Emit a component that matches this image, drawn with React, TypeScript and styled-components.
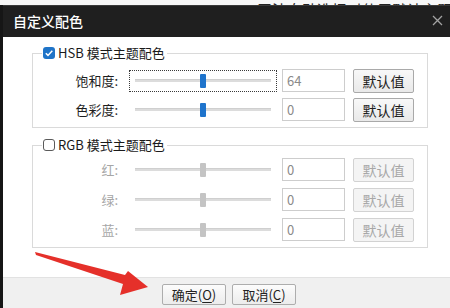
import styled, { createGlobalStyle } from 'styled-components';

const GlobalStyle = createGlobalStyle`
    html, body {
        margin: 0;
        padding: 0;
        overflow: hidden;
        background: #ffffff;
    }
    * {
        box-sizing: border-box;
    }
`;

const font = `"Noto Sans CJK SC", "Noto Sans", sans-serif`;

type RowData = { label: string; value: string; pos: number; focused?: boolean };

const hsbRows: RowData[] = [
    { label: '饱和度:', value: '64', pos: 48, focused: true },
    { label: '色彩度:', value: '0', pos: 48 },
];

const rgbRows: RowData[] = [
    { label: '红:', value: '0', pos: 48 },
    { label: '绿:', value: '0', pos: 48 },
    { label: '蓝:', value: '0', pos: 48 },
];

function CheckMark() {
    return (
        <svg width="12" height="12" viewBox="0 0 12 12">
            <rect x="0" y="0" width="12" height="12" rx="3" fill="#1f74c8" />
            <path d="M2.8 6.2 L5 8.4 L9.3 3.8" stroke="#fff" strokeWidth="1.5" fill="none" />
        </svg>
    );
}

function ColorGroup({ title, checked, rows, top, gap }: { title: string; checked: boolean; rows: RowData[]; top: number; gap: number }) {
    const disabled = !checked;
    return (
        <Group>
            <Legend>
                {checked ? <CheckMark /> : <EmptyBox />}
                <LegendText>{title}</LegendText>
            </Legend>
            <Rows $top={top} $gap={gap}>
                {rows.map((r) => (
                    <Row key={r.label}>
                        <Label $disabled={disabled}>{r.label}</Label>
                        <Slider $focused={!!r.focused}>
                            <Track />
                            <Thumb $disabled={disabled} style={{ left: `${r.pos}%` }} />
                        </Slider>
                        <ValueInput>{r.value}</ValueInput>
                        <SmallButton $disabled={disabled}>默认值</SmallButton>
                    </Row>
                ))}
            </Rows>
        </Group>
    );
}

export default function App() {
    return (
        <>
            <GlobalStyle />
            <Page>
                <Backdrop>
                    <Dot />
                    <BackText>无法自动选择时使用默认主题配色设置</BackText>
                </Backdrop>
                <Dialog>
                    <TitleBar>
                        <Title>自定义配色</Title>
                        <CloseButton>
                            <svg width="11" height="11" viewBox="0 0 11 11">
                                <path d="M1 1 L10 10 M10 1 L1 10" stroke="#a3a3a3" strokeWidth="1.3" />
                            </svg>
                        </CloseButton>
                    </TitleBar>
                    <Body>
                        <ColorGroup title="HSB 模式主题配色" checked rows={hsbRows} top={8} gap={6} />
                        <Spacer />
                        <ColorGroup title="RGB 模式主题配色" checked={false} rows={rgbRows} top={5} gap={7} />
                    </Body>
                    <Footer>
                        <FooterButton>确定(<u>O</u>)</FooterButton>
                        <FooterButton>取消(<u>C</u>)</FooterButton>
                    </Footer>
                </Dialog>
                <Arrow width="450" height="308" viewBox="0 0 450 308">
                    <polygon
                        points="35,252 125,275 128,271 148,287 120,295 123,284 36,255"
                        fill="#e5302a"
                    />
                </Arrow>
            </Page>
        </>
    );
}

const Page = styled.div`
    position: relative;
    width: 450px;
    height: 308px;
    overflow: hidden;
    font-family: ${font};
    background: #f6f6f6;
`;

const Backdrop = styled.div`
    height: 5px;
    overflow: hidden;
    display: flex;
    align-items: flex-start;
    padding-left: 253px;
    background: #f7f7f7;
`;

const Dot = styled.div`
    width: 12px;
    height: 12px;
    margin-top: 1px;
    border-radius: 50%;
    background: #2a6fc0;
`;

const BackText = styled.div`
    margin-left: 4px;
    margin-top: 1px;
    font-size: 15px;
    line-height: 18px;
    color: #222;
    white-space: nowrap;
`;

const Dialog = styled.div`
    display: flex;
    flex-direction: column;
    height: 303px;
    border-left: 3px solid #161616;
    background: #ffffff;
`;

const TitleBar = styled.div`
    display: flex;
    align-items: center;
    justify-content: space-between;
    height: 32px;
    padding: 0 4px 2px 10px;
    background: #1f1f1f;
    border-top: 1px solid #3a3a3a;
`;

const Title = styled.div`
    color: #ffffff;
    font-size: 14px;
    font-weight: 500;
    line-height: 20px;
`;

const CloseButton = styled.div`
    width: 14px;
    display: flex;
    align-items: center;
`;

const Body = styled.div`
    height: 240px;
    padding: 16px 0 0 29px;
    background: #ffffff;
`;

const Spacer = styled.div`
    height: 17px;
`;

const Group = styled.div`
    width: 396px;
    border: 1px solid #dadada;
    padding-bottom: 6px;
`;

const Legend = styled.div`
    display: flex;
    align-items: center;
    gap: 3px;
    width: fit-content;
    height: 16px;
    margin: -9px 0 0 9px;
    padding: 0 2px 0 1px;
    background: #ffffff;
`;

const EmptyBox = styled.div`
    width: 12px;
    height: 12px;
    border: 1px solid #5a5a5a;
    border-radius: 3px;
    background: #ffffff;
`;

const LegendText = styled.span`
    font-size: 13px;
    line-height: 16px;
    color: #1a1a1a;
`;

const Rows = styled.div<{ $top: number; $gap: number }>`
    display: flex;
    flex-direction: column;
    gap: ${(p) => p.$gap}px;
    margin-top: ${(p) => p.$top}px;
`;

const Row = styled.div`
    display: flex;
    align-items: center;
    height: 23px;
`;

const Label = styled.div<{ $disabled: boolean }>`
    width: 87px;
    padding-right: 2px;
    text-align: right;
    font-size: 13px;
    color: ${(p) => (p.$disabled ? '#a6a6a6' : '#1e1e1e')};
`;

const Slider = styled.div<{ $focused: boolean }>`
    position: relative;
    width: 148px;
    height: 22px;
    margin-left: 9px;
    border: 1px dotted ${(p) => (p.$focused ? '#3a3a3a' : 'transparent')};
    display: flex;
    align-items: center;
    padding: 0 5px;
`;

const Track = styled.div`
    width: 100%;
    height: 3px;
    background: #dcdcdc;
    border-top: 1px solid #cfcfcf;
`;

const Thumb = styled.div<{ $disabled: boolean }>`
    position: absolute;
    top: 3px;
    width: 6px;
    height: 14px;
    border-radius: 1px;
    background: ${(p) => (p.$disabled ? '#c4c4c4' : '#1f74cc')};
`;

const ValueInput = styled.div`
    width: 63px;
    height: 23px;
    margin-left: 5px;
    padding-left: 4px;
    border: 1px solid #cdcdcd;
    font-size: 13px;
    line-height: 21px;
    color: #8a8a8a;
    background: #ffffff;
`;

const SmallButton = styled.div<{ $disabled: boolean }>`
    width: 61px;
    height: 24px;
    margin-left: 8px;
    display: flex;
    align-items: center;
    justify-content: center;
    border: 1px solid ${(p) => (p.$disabled ? '#d2d2d2' : '#a9a9a9')};
    border-radius: 2px;
    background: ${(p) => (p.$disabled ? '#f4f4f4' : 'linear-gradient(#f8f8f8, #e9e9e9)')};
    font-size: 14px;
    color: ${(p) => (p.$disabled ? '#a8a8a8' : '#1e1e1e')};
`;

const Footer = styled.div`
    flex: 1;
    display: flex;
    gap: 6px;
    padding: 6px 0 0 159px;
    background: #f0f0f0;
    border-top: 1px solid #e2e2e2;
`;

const FooterButton = styled.div`
    width: 64px;
    height: 21px;
    display: flex;
    align-items: center;
    justify-content: center;
    border: 1px solid #adadad;
    border-radius: 2px;
    background: linear-gradient(#fcfcfc, #ececec);
    font-size: 13px;
    color: #222;
    u {
        text-underline-offset: 2px;
    }
`;

const Arrow = styled.svg`
    position: absolute;
    left: 0;
    top: 0;
    pointer-events: none;
`;
